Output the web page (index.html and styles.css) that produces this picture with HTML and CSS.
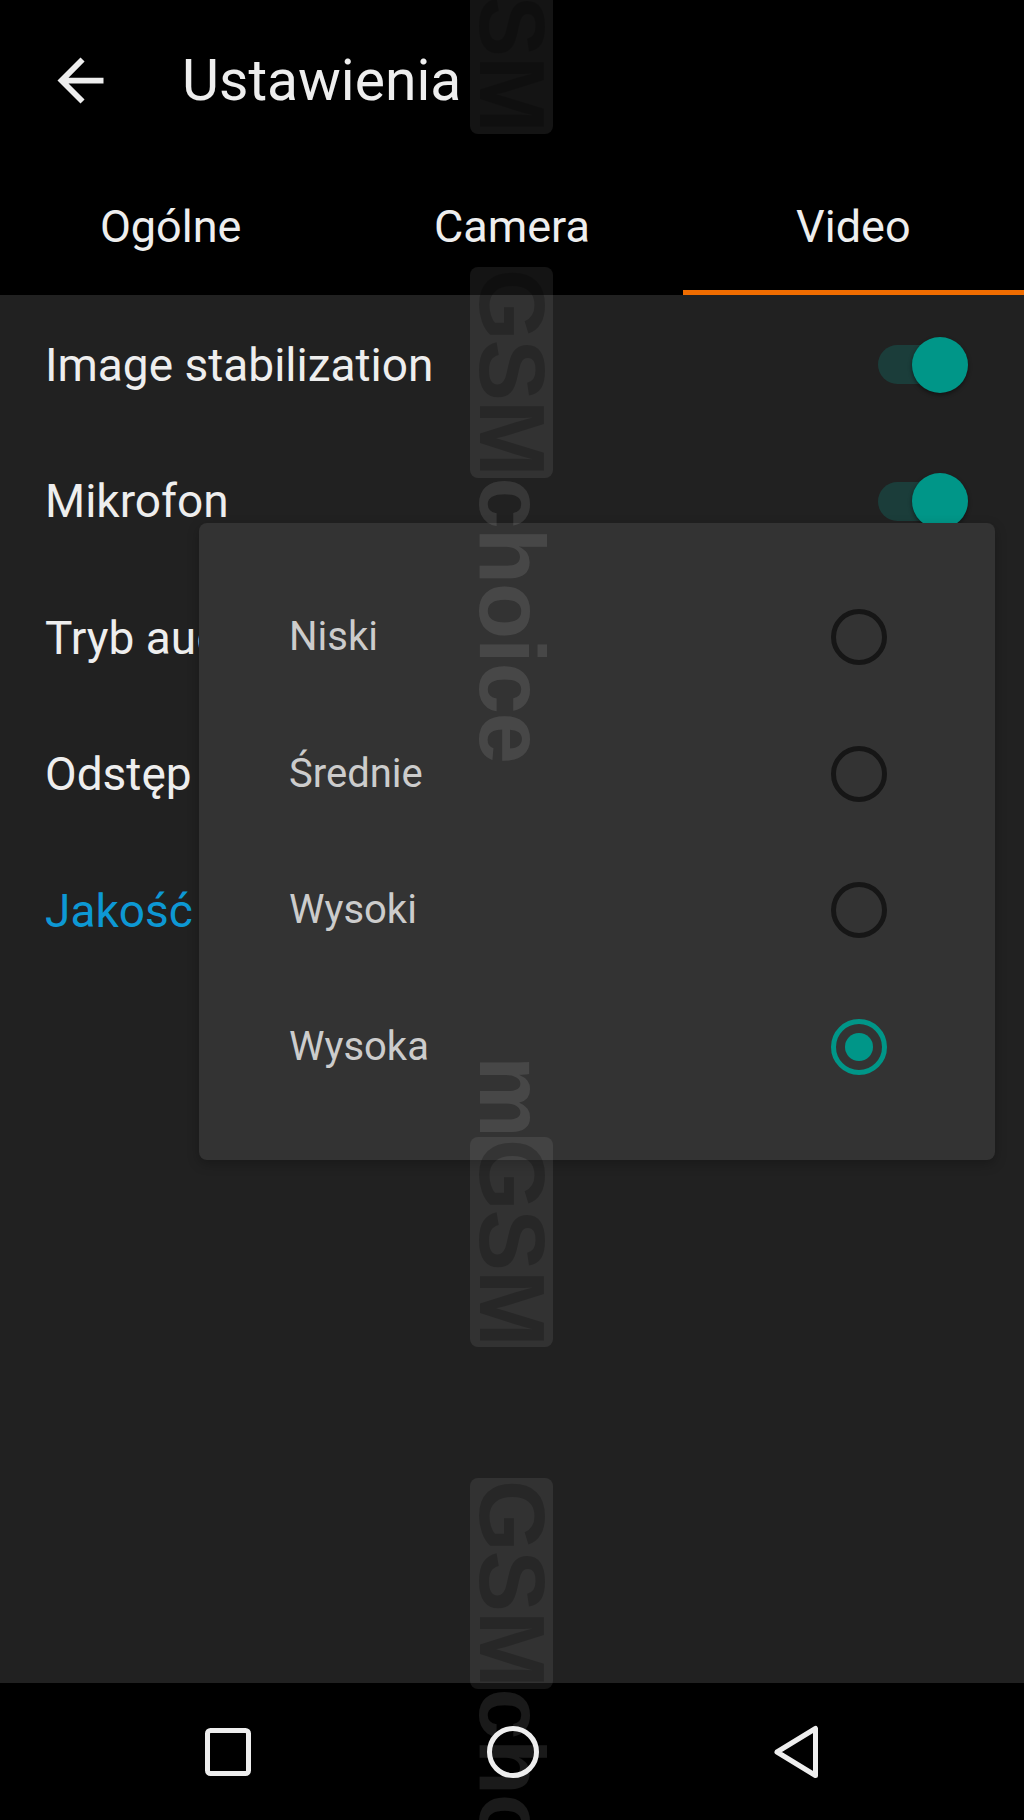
FILE: index.html
```html
<!DOCTYPE html>
<html lang="pl">
<head>
    <meta charset="UTF-8">
    <meta name="viewport" content="width=device-width, initial-scale=1.0">
    <title>Ustawienia</title>
    <link rel="stylesheet" href="styles.css">
</head>
<body>
    <div class="screen">
        <header class="appbar">
            <div class="toolbar">
                <button class="back" aria-label="Wstecz">
                    <svg viewBox="0 0 24 24"><path d="M20 11H7.83l5.59-5.59L12 4l-8 8 8 8 1.41-1.41L7.83 13H20v-2z"/></svg>
                </button>
                <h1>Ustawienia</h1>
            </div>
            <nav class="tabs">
                <a href="#" class="tab">Ogólne</a>
                <a href="#" class="tab">Camera</a>
                <a href="#" class="tab active">Video</a>
            </nav>
        </header>

        <main class="settings">
            <div class="row">
                <span>Image stabilization</span>
                <span class="switch"><span class="track"></span><span class="thumb"></span></span>
            </div>
            <div class="row">
                <span>Mikrofon</span>
                <span class="switch"><span class="track"></span><span class="thumb"></span></span>
            </div>
            <div class="row"><span>Tryb audio</span></div>
            <div class="row"><span>Odstęp</span></div>
            <div class="row link"><span>Jakość</span></div>
        </main>

        <!-- okno wyboru jakości -->
        <div class="dialog">
            <div class="option"><span>Niski</span><span class="radio"></span></div>
            <div class="option"><span>Średnie</span><span class="radio"></span></div>
            <div class="option"><span>Wysoki</span><span class="radio"></span></div>
            <div class="option"><span>Wysoka</span><span class="radio checked"></span></div>
        </div>

        <footer class="navbar">
            <span class="nav-key">
                <svg viewBox="0 0 60 60"><rect x="9.5" y="8.5" width="41" height="43" rx="3"/></svg>
            </span>
            <span class="nav-key">
                <svg viewBox="0 0 60 60"><circle cx="30" cy="30" r="23.5"/></svg>
            </span>
            <span class="nav-key">
                <svg viewBox="0 0 60 60"><path d="M9 30 L47.5 6.5 L47.5 53.5 Z"/></svg>
            </span>
        </footer>

        <!-- znak wodny -->
        <div class="wm wm-1"><span class="wm-box">GSM</span></div>
        <div class="wm wm-2"><span class="wm-box">GSM</span><span class="wm-text">choice</span></div>
        <div class="wm wm-3"><span class="wm-text">m</span><span class="wm-box">GSM</span></div>
        <div class="wm wm-4"><span class="wm-box">GSM</span><span class="wm-text">choice</span></div>
    </div>
</body>
</html>
```

FILE: styles.css
```css
* {
    margin: 0;
    padding: 0;
    box-sizing: border-box;
}

body {
    background-color: #000;
    color: #eeeeee;
    font-family: Roboto, 'Noto Sans', sans-serif;
}

.screen {
    position: relative;
    width: 1024px;
    height: 1820px;
    display: flex;
    flex-direction: column;
    overflow: hidden;
}

/* Pasek tytułu i zakładki */
.appbar {
    background-color: #000;
}

.toolbar {
    height: 160px;
    display: flex;
    align-items: center;
}

.back {
    width: 69px;
    height: 69px;
    margin-left: 46px;
    background: none;
    border: none;
    display: flex;
}

.back svg {
    width: 69px;
    height: 69px;
    fill: #eeeeee;
}

.toolbar h1 {
    margin-left: 67px;
    font-size: 57px;
    font-weight: 400;
    line-height: 1;
    color: #eeeeee;
}

.tabs {
    height: 135px;
    display: flex;
}

.tab {
    flex: 1;
    display: flex;
    align-items: center;
    justify-content: center;
    padding-bottom: 2px;
    font-size: 45px;
    line-height: 1;
    color: #eeeeee;
    text-decoration: none;
}

.tab.active {
    box-shadow: inset 0 -5px 0 #ef6c00;
}

/* Lista ustawień */
.settings {
    flex: 1;
    background-color: #212121;
    padding-top: 1.5px;
}

.row {
    height: 136.5px;
    display: flex;
    align-items: center;
    justify-content: space-between;
    padding: 0 56px 0 45px;
    font-size: 46px;
    line-height: 1;
}

.row.link {
    color: #0d98d4;
}

.switch {
    display: flex;
    align-items: center;
}

.track {
    width: 82px;
    height: 39px;
    border-radius: 20px;
    background-color: #1b3d3a;
}

.thumb {
    width: 56px;
    height: 56px;
    margin-left: -48px;
    border-radius: 50%;
    background-color: #009688;
    box-shadow: 0 2px 4px rgba(0,0,0,0.45);
}

/* Okno dialogowe */
.dialog {
    position: absolute;
    left: 199px;
    top: 523px;
    width: 796px;
    height: 637px;
    padding: 46px 108px 45px 90px;
    background-color: #333333;
    border-radius: 8px;
    box-shadow: 0 4px 12px rgba(0,0,0,0.25);
}

.option {
    height: 136.5px;
    display: flex;
    align-items: center;
    justify-content: space-between;
    font-size: 40px;
    line-height: 1;
    color: #cccccc;
}

.radio {
    width: 56px;
    height: 56px;
    border: 5px solid #161616;
    border-radius: 50%;
    display: flex;
    align-items: center;
    justify-content: center;
}

.radio.checked {
    border-color: #009688;
}

.radio.checked::after {
    content: '';
    width: 28px;
    height: 28px;
    border-radius: 50%;
    background-color: #009688;
}

/* Przyciski systemowe */
.navbar {
    height: 137px;
    background-color: #000;
    display: flex;
    align-items: center;
    padding-left: 198px;
    gap: 225px;
}

.nav-key svg {
    display: block;
    width: 60px;
    height: 60px;
    fill: none;
    stroke: #eeeeee;
    stroke-width: 5;
    stroke-linejoin: round;
}

/* Znak wodny */
.wm {
    position: absolute;
    left: 470px;
    writing-mode: vertical-rl;
    font-family: 'Liberation Sans', Arial, sans-serif;
    font-weight: bold;
    font-size: 92px;
    line-height: 83px;
    letter-spacing: -1px;
    pointer-events: none;
    white-space: nowrap;
}

.wm-box {
    display: inline-block;
    width: 83px;
    padding: 2px 0;
    background-color: rgba(255,255,255,0.08);
    border-radius: 8px;
    color: rgba(0,0,0,0.22);
}

.wm-text {
    color: rgba(255,255,255,0.1);
}

.wm-1 { top: -77px; }
.wm-2 { top: 267px; }
.wm-3 { top: 1056px; }
.wm-4 { top: 1478px; }
```
